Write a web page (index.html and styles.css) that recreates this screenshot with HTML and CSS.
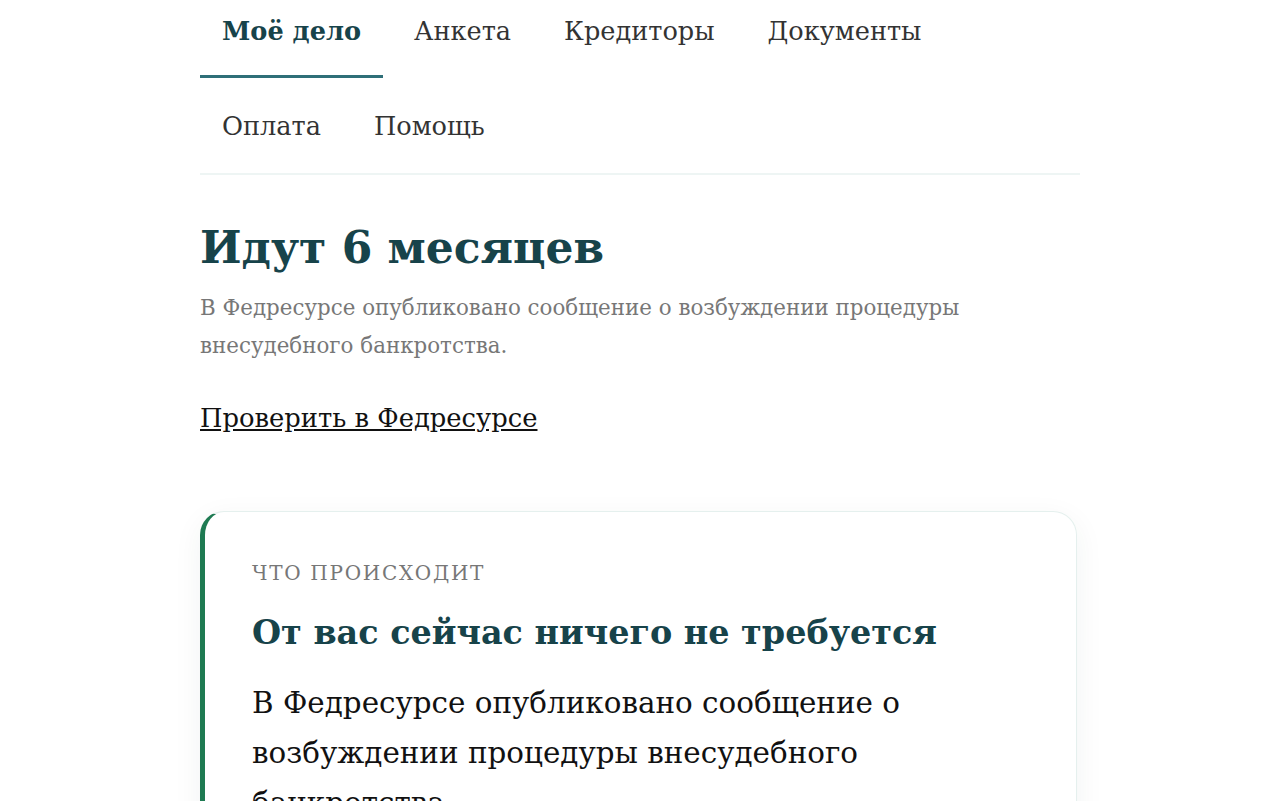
FILE: index.html
```html
<!DOCTYPE html>
<html lang="ru">
<head>
    <meta charset="UTF-8">
    <meta name="viewport" content="width=device-width, initial-scale=1.0">
    <title>Моё дело</title>
    <link rel="stylesheet" href="styles.css">
</head>
<body>
    <div class="container">
        <nav class="tabs">
            <a class="tab active" href="#">Моё дело</a>
            <a class="tab" href="#">Анкета</a>
            <a class="tab" href="#">Кредиторы</a>
            <a class="tab" href="#">Документы</a>
            <a class="tab" href="#">Оплата</a>
            <a class="tab" href="#">Помощь</a>
        </nav>

        <h1 class="status-title">Идут 6 месяцев</h1>
        <p class="status-text">В Федресурсе опубликовано сообщение о возбуждении процедуры внесудебного банкротства.</p>
        <a class="check-link" href="#">Проверить в Федресурсе</a>

        <div class="card">
            <div class="card-label">Что происходит</div>
            <h2 class="card-title">От вас сейчас ничего не требуется</h2>
            <p class="card-text">В Федресурсе опубликовано сообщение о возбуждении процедуры внесудебного банкротства.</p>
        </div>
    </div>
</body>
</html>
```

FILE: styles.css
```css
body {
    font-family: "DejaVu Serif", "Liberation Serif", serif;
    background-color: #ffffff;
    color: #111;
    margin: 0;
    padding: 0;
}

.container {
    max-width: 880px;
    margin: 0 auto;
}

.tabs {
    display: flex;
    flex-wrap: wrap;
    column-gap: 9px;
    row-gap: 17px;
    border-bottom: 2px solid #eef5f4;
}

.tab {
    display: block;
    padding: 14px 22px 27px;
    line-height: 34px;
    font-size: 25.6px;
    color: #333;
    text-decoration: none;
    border-bottom: 3px solid transparent;
}

.tab.active {
    font-weight: bold;
    color: #17434a;
    border-bottom-color: #2f6f78;
}

.status-title {
    margin: 45px 0 13px;
    font-size: 44px;
    line-height: 56px;
    color: #17434a;
}

.status-text {
    margin: 0 0 34px;
    font-size: 21.4px;
    line-height: 38px;
    color: #777;
}

.check-link {
    display: inline-block;
    font-size: 25.8px;
    line-height: 38px;
    color: #111;
}

.card {
    margin: 74px 3px 0 0;
    padding: 46px 52px 40px 47px;
    background-color: #fff;
    border: 1px solid #e5f0ee;
    border-left: 5px solid #1e7a52;
    border-radius: 24px;
    box-shadow: 0 8px 30px rgba(0, 60, 50, 0.06);
}

.card-label {
    font-size: 20px;
    line-height: 30px;
    color: #777;
    text-transform: uppercase;
    letter-spacing: 1.7px;
}

.card-title {
    margin: 23px 0 23px;
    font-size: 33.4px;
    line-height: 44px;
    color: #17434a;
}

.card-text {
    margin: 0;
    font-size: 29.4px;
    line-height: 50px;
}
```
